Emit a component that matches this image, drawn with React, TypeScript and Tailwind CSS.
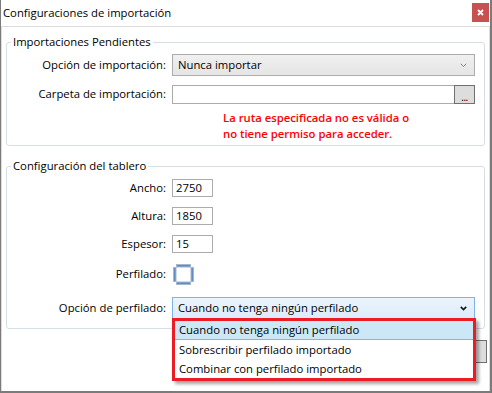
import React from "react";

function Chevron({ dark }: { dark?: boolean }) {
  return (
    <svg width="7" height="5" viewBox="0 0 7 5" className="shrink-0">
      <path
        d="M0.8 0.8 L3.5 3.6 L6.2 0.8"
        fill="none"
        stroke={dark ? "#1a1a1a" : "#808080"}
        strokeWidth={dark ? 1.7 : 1}
      />
    </svg>
  );
}

function CheckBox() {
  return (
    <svg width="21" height="21" viewBox="0 0 21 21">
      <rect x="3.5" y="0.5" width="14" height="2.5" fill="#5d8cc6" stroke="#a7b8cb" strokeWidth="1" />
      <rect x="3.5" y="18" width="14" height="2.5" fill="#5d8cc6" stroke="#a7b8cb" strokeWidth="1" />
      <rect x="0.5" y="3.5" width="2.5" height="14" fill="#5d8cc6" stroke="#a7b8cb" strokeWidth="1" />
      <rect x="18" y="3.5" width="2.5" height="14" fill="#5d8cc6" stroke="#a7b8cb" strokeWidth="1" />
    </svg>
  );
}

function Label({ children }: { children: React.ReactNode }) {
  return <div className="text-right whitespace-nowrap">{children}</div>;
}

function SmallBox({ value }: { value: string }) {
  return (
    <div className="w-[41px] h-[18px] border border-[#acacac] bg-white pl-[3px] leading-[16px]">
      {value}
    </div>
  );
}

export default function App() {
  return (
    <div className="relative w-[492px] h-[393px] bg-white border-l border-r-2 border-b-2 border-[#7b7b7b] flex flex-col font-['Open_Sans',sans-serif] text-[11.3px] text-black overflow-hidden">
      {/* title bar */}
      <div className="h-[26px] shrink-0 flex items-start justify-between pl-[2px]">
        <span className="leading-[16px] mt-[5px]">Configuraciones de importación</span>
        <div className="mt-[3px] mr-[1px] w-[17px] h-[19px] bg-[#c75050] flex items-center justify-center">
          <svg width="7" height="7" viewBox="0 0 7 7">
            <path d="M1 1 L6 6 M6 1 L1 6" stroke="white" strokeWidth="1.8" />
          </svg>
        </div>
      </div>

      {/* client area */}
      <div className="flex-1 border-t border-x border-[#dcdcdc] flex flex-col">
        <fieldset className="mt-[7px] mx-[4px] border border-[#d5dfe5] rounded-[3px] pb-[3px]">
          <legend className="ml-[4px] px-[2px] leading-[16px]">Importaciones Pendientes</legend>
          <div className="grid grid-cols-[159px_303px] gap-x-[6px] pt-[4px] items-center">
            <Label>Opción de importación:</Label>
            <div className="h-[22px] border border-[#acacac] bg-gradient-to-b from-[#f0f0f0] to-[#e5e5e5] flex items-center justify-between pl-[5px] pr-[7px]">
              <span>Nunca importar</span>
              <Chevron />
            </div>

            <div className="col-span-2 h-[9px]" />

            <Label>Carpeta de importación:</Label>
            <div className="h-[19px] flex">
              <div className="flex-1 border border-[#acacac] border-r-0 bg-white" />
              <div className="w-[21px] border border-[#707070] bg-[#dddddd] flex items-end justify-center pb-[2px]">
                <span className="leading-[8px] text-[10px] tracking-[-0.5px]">...</span>
              </div>
            </div>

            <div />
            <div className="pt-[6px] pl-[51px] font-semibold text-[#ff0000] leading-[16px] whitespace-nowrap">
              La ruta especificada no es válida o
              <br />
              no tiene permiso para acceder.
            </div>
          </div>
        </fieldset>

        <fieldset className="mt-[12px] mx-[4px] border border-[#d5dfe5] rounded-[3px] pb-[9px]">
          <legend className="ml-[4px] px-[2px] leading-[16px]">Configuración del tablero</legend>
          <div className="grid grid-cols-[159px_303px] gap-x-[6px] pt-[5px] items-center">
            <Label>Ancho:</Label>
            <SmallBox value="2750" />
            <div className="col-span-2 h-[10px]" />
            <Label>Altura:</Label>
            <SmallBox value="1850" />
            <div className="col-span-2 h-[10px]" />
            <Label>Espesor:</Label>
            <SmallBox value="15" />
            <div className="col-span-2 h-[11px]" />
            <Label>Perfilado:</Label>
            <div className="h-[21px] pl-[1px] flex items-center">
              <CheckBox />
            </div>
            <div className="col-span-2 h-[12px]" />
            <Label>Opción de perfilado:</Label>
            <div className="h-[22px] border border-[#7eb4ea] bg-gradient-to-b from-[#ecf4fc] to-[#dcecfc] flex items-center justify-between pl-[5px] pr-[7px]">
              <span>Cuando no tenga ningún perfilado</span>
              <Chevron dark />
            </div>
          </div>
        </fieldset>

        <div className="flex justify-end pr-[2px] mt-[11px]">
          <div className="w-[75px] h-[23px] border border-[#707070] bg-[#dddddd] flex items-center justify-center">
            Cancelar
          </div>
        </div>
      </div>

      {/* open dropdown list with red highlight frame */}
      <div className="absolute left-[171px] top-[318px] w-[304px] h-[63px] bg-white border-[3px] border-[#ed1c24] shadow-[3px_3px_3px_rgba(0,0,0,0.35)] flex flex-col">
        <div className="h-[19px] shrink-0 bg-[#cce8f7] border-b border-[#7fb9e0] pl-[4px] leading-[18px]">
          Cuando no tenga ningún perfilado
        </div>
        <div className="h-[20px] shrink-0 pl-[4px] leading-[20px]">Sobrescribir perfilado importado</div>
        <div className="h-[18px] shrink-0 pl-[4px] leading-[18px]">Combinar con perfilado importado</div>
      </div>
    </div>
  );
}
